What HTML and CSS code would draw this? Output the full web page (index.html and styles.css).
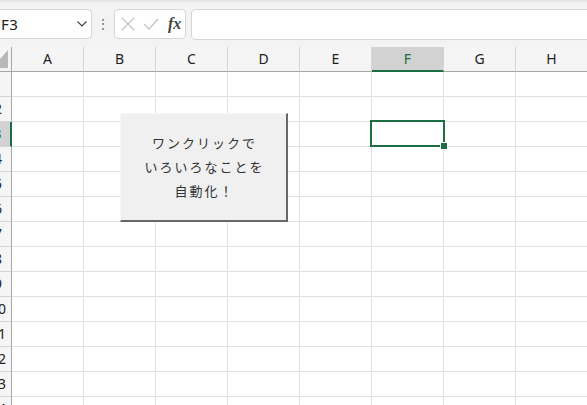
FILE: index.html
```html
<!DOCTYPE html>
<html lang="ja">
<head>
    <meta charset="UTF-8">
    <meta name="viewport" content="width=device-width, initial-scale=1.0">
    <title>Sheet</title>
    <link rel="stylesheet" href="styles.css">
</head>
<body>
    <div class="toolbar">
        <div class="name-box">
            <span class="cell-ref">F3</span>
            <svg class="chevron" width="10" height="6" viewBox="0 0 10 6"><path d="M0.5 0.5 L5 5 L9.5 0.5" fill="none" stroke="#444" stroke-width="1.2"/></svg>
        </div>
        <div class="grip">⋮</div>
        <div class="fx-box">
            <svg width="14" height="14" viewBox="0 0 14 14"><path d="M1 1 L13 13 M13 1 L1 13" stroke="#c4c4c4" stroke-width="1.3"/></svg>
            <svg width="16" height="14" viewBox="0 0 16 14"><path d="M1 7 L6 12 L15 2" fill="none" stroke="#c4c4c4" stroke-width="1.3"/></svg>
            <span class="fx">fx</span>
        </div>
        <div class="formula-bar"></div>
    </div>

    <div class="sheet">
        <div class="row head">
            <div class="rh corner">
                <svg width="26" height="24" viewBox="0 0 26 24"><polygon points="23,3 23,21 7,21" fill="#b8b8b8"/></svg>
            </div>
            <div class="ch">A</div><div class="ch">B</div><div class="ch">C</div><div class="ch">D</div>
            <div class="ch">E</div><div class="ch active">F</div><div class="ch">G</div><div class="ch">H</div>
        </div>
        <div class="row"><div class="rh">1</div><div class="c"></div><div class="c"></div><div class="c"></div><div class="c"></div><div class="c"></div><div class="c"></div><div class="c"></div><div class="c"></div></div>
        <div class="row"><div class="rh">2</div><div class="c"></div><div class="c"></div><div class="c"></div><div class="c"></div><div class="c"></div><div class="c"></div><div class="c"></div><div class="c"></div></div>
        <div class="row"><div class="rh active">3</div><div class="c"></div><div class="c"></div><div class="c"></div><div class="c"></div><div class="c"></div><div class="c"></div><div class="c"></div><div class="c"></div></div>
        <div class="row"><div class="rh">4</div><div class="c"></div><div class="c"></div><div class="c"></div><div class="c"></div><div class="c"></div><div class="c"></div><div class="c"></div><div class="c"></div></div>
        <div class="row"><div class="rh">5</div><div class="c"></div><div class="c"></div><div class="c"></div><div class="c"></div><div class="c"></div><div class="c"></div><div class="c"></div><div class="c"></div></div>
        <div class="row"><div class="rh">6</div><div class="c"></div><div class="c"></div><div class="c"></div><div class="c"></div><div class="c"></div><div class="c"></div><div class="c"></div><div class="c"></div></div>
        <div class="row"><div class="rh">7</div><div class="c"></div><div class="c"></div><div class="c"></div><div class="c"></div><div class="c"></div><div class="c"></div><div class="c"></div><div class="c"></div></div>
        <div class="row"><div class="rh">8</div><div class="c"></div><div class="c"></div><div class="c"></div><div class="c"></div><div class="c"></div><div class="c"></div><div class="c"></div><div class="c"></div></div>
        <div class="row"><div class="rh">9</div><div class="c"></div><div class="c"></div><div class="c"></div><div class="c"></div><div class="c"></div><div class="c"></div><div class="c"></div><div class="c"></div></div>
        <div class="row"><div class="rh">10</div><div class="c"></div><div class="c"></div><div class="c"></div><div class="c"></div><div class="c"></div><div class="c"></div><div class="c"></div><div class="c"></div></div>
        <div class="row"><div class="rh">11</div><div class="c"></div><div class="c"></div><div class="c"></div><div class="c"></div><div class="c"></div><div class="c"></div><div class="c"></div><div class="c"></div></div>
        <div class="row"><div class="rh">12</div><div class="c"></div><div class="c"></div><div class="c"></div><div class="c"></div><div class="c"></div><div class="c"></div><div class="c"></div><div class="c"></div></div>
        <div class="row"><div class="rh">13</div><div class="c"></div><div class="c"></div><div class="c"></div><div class="c"></div><div class="c"></div><div class="c"></div><div class="c"></div><div class="c"></div></div>
        <div class="row"><div class="rh">14</div><div class="c"></div><div class="c"></div><div class="c"></div><div class="c"></div><div class="c"></div><div class="c"></div><div class="c"></div><div class="c"></div></div>

        <!-- shape button and selection sit over the grid -->
        <div class="macro-button">
            <p>ワンクリックで</p>
            <p>いろいろなことを</p>
            <p>自動化！</p>
        </div>
        <div class="selection"><span class="handle"></span></div>
    </div>
</body>
</html>
```

FILE: styles.css
```css
body {
    margin: 0;
    width: 587px;
    height: 405px;
    overflow: hidden;
    background-color: #ffffff;
    font-family: "Noto Sans", "Noto Sans CJK JP", sans-serif;
}

.toolbar {
    height: 47px;
    box-sizing: border-box;
    background-color: #f3f3f3;
    border-top: 2px solid #e6e6e6;
    display: flex;
    align-items: flex-start;
    padding-top: 7px;
    margin-left: -10px;
    width: 620px;
}

.name-box {
    width: 102px;
    height: 30px;
    box-sizing: border-box;
    background-color: #ffffff;
    border: 1px solid #d6d6d6;
    border-radius: 4px;
    display: flex;
    align-items: center;
    justify-content: space-between;
    padding: 0 4px 0 10px;
}

.cell-ref {
    font-size: 15px;
    color: #222;
    letter-spacing: 0.5px;
}

.grip {
    width: 22px;
    text-align: center;
    font-size: 14px;
    line-height: 30px;
    color: #777;
}

.fx-box {
    width: 72px;
    height: 30px;
    box-sizing: border-box;
    background-color: #ffffff;
    border: 1px solid #d6d6d6;
    border-radius: 4px;
    display: flex;
    align-items: center;
    gap: 8px;
    padding-left: 6px;
}

.fx {
    font-family: "Liberation Serif", serif;
    font-style: italic;
    font-weight: bold;
    font-size: 16px;
    color: #444;
    margin-left: 1px;
}

.formula-bar {
    flex: 1;
    height: 31px;
    box-sizing: border-box;
    margin-left: 5px;
    background-color: #ffffff;
    border: 1px solid #d6d6d6;
    border-radius: 4px;
}

.sheet {
    position: relative;
    margin-left: -15px;
}

.row {
    display: flex;
    height: 25px;
}

.rh {
    width: 27px;
    flex: none;
    box-sizing: border-box;
    background-color: #f5f5f5;
    border-right: 1px solid #a6a6a6;
    border-bottom: 1px solid #d4d4d4;
    font-size: 14px;
    line-height: 24px;
    text-align: center;
    color: #222;
}

.rh.active {
    background-color: #d2d2d2;
    border-right: 2px solid #1e6c41;
    color: #1e6c41;
}

.rh.corner {
    border-bottom: 1px solid #a6a6a6;
    line-height: 0;
}

.c {
    width: 72px;
    flex: none;
    box-sizing: border-box;
    border-right: 1px solid #e1e1e1;
    border-bottom: 1px solid #e1e1e1;
}

.ch {
    width: 72px;
    flex: none;
    box-sizing: border-box;
    background-color: #f5f5f5;
    border-right: 1px solid #d4d4d4;
    border-bottom: 1px solid #a6a6a6;
    font-size: 14px;
    line-height: 24px;
    text-align: center;
    color: #222;
}

.ch.active {
    background-color: #d2d2d2;
    border-bottom: 2px solid #1e6c41;
    color: #1e6c41;
}

.macro-button {
    position: absolute;
    left: 135px;
    top: 66px;
    width: 168px;
    height: 109px;
    box-sizing: border-box;
    background-color: #f0f0f0;
    border-top: 1px solid #f7f7f7;
    border-left: 1px solid #f7f7f7;
    border-right: 2px solid #686868;
    border-bottom: 2px solid #686868;
    display: flex;
    flex-direction: column;
    justify-content: center;
    align-items: center;
}

.macro-button p {
    margin: 0 0 0 2px;
    font-family: "Noto Sans CJK JP", sans-serif;
    font-size: 13px;
    line-height: 24px;
    color: #333;
    letter-spacing: 2px;
}

.selection {
    position: absolute;
    left: 385px;
    top: 73px;
    width: 75px;
    height: 27px;
    box-sizing: border-box;
    border: 2px solid #1e6c41;
}

.handle {
    position: absolute;
    right: -5px;
    bottom: -5px;
    width: 6px;
    height: 6px;
    background-color: #1e6c41;
    border: 1px solid #ffffff;
}
```
